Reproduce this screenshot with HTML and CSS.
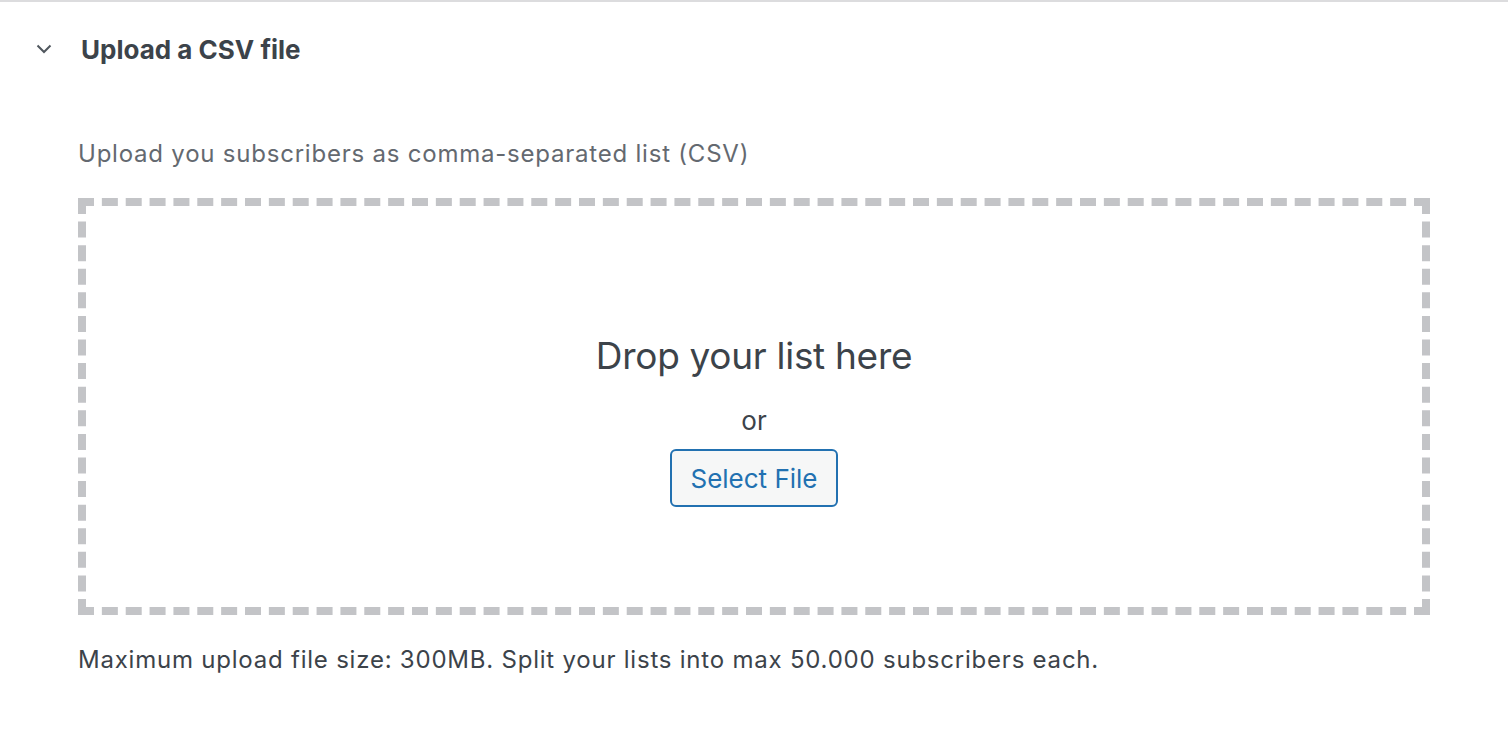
FILE: index.html
```html
<!DOCTYPE html>
<html>
<head>
<meta charset="utf-8">
<link rel="stylesheet" href="styles.css">
</head>
<body>
<section class="panel">
  <header class="panel-header">
    <span class="chevron">
      <svg width="16" height="10" viewBox="0 0 16 10"><path d="M1.5 1.5 L8 8 L14.5 1.5" fill="none" stroke="#50575e" stroke-width="2"/></svg>
    </span>
    <h2 class="panel-title">Upload a CSV file</h2>
  </header>
  <div class="panel-body">
    <p class="intro">Upload you subscribers as comma-separated list (CSV)</p>
    <div class="dropzone">
      <div class="drop-title">Drop your list here</div>
      <div class="drop-or">or</div>
      <button class="select-btn" type="button">Select File</button>
    </div>
    <p class="note">Maximum upload file size: 300MB. Split your lists into max 50.000 subscribers each.</p>
  </div>
</section>
</body>
</html>
```

FILE: styles.css
```css
html, body {
  margin: 0;
  padding: 0;
  background: #ffffff;
}
body {
  font-family: Inter, "Noto Sans", "Liberation Sans", sans-serif;
  color: #3c434a;
}
.panel {
  border-top: 2px solid #dcdcde;
}
.panel-header {
  display: flex;
  align-items: center;
  height: 94px;
}
.chevron {
  width: 16px;
  height: 10px;
  margin-left: 36px;
  margin-right: 29px;
  display: flex;
}
.panel-title {
  margin: 0;
  font-size: 26px;
  font-weight: 700;
  color: #3c434a;
}
.panel-body {
  padding: 0 78px;
}
.intro {
  margin: 42px 0 0;
  font-size: 24px;
  line-height: 32px;
  letter-spacing: 0.78px;
  color: #646970;
}
.dropzone {
  margin-top: 28px;
  height: 417px;
  box-sizing: border-box;
  border: 8px dashed #c3c4c7;
  display: flex;
  flex-direction: column;
  align-items: center;
  padding-top: 127px;
}
.drop-title {
  font-size: 37px;
  line-height: 46px;
  letter-spacing: -0.3px;
  color: #3c434a;
}
.drop-or {
  margin-top: 26px;
  font-size: 26px;
  line-height: 32px;
  color: #3c434a;
}
.select-btn {
  margin-top: 12px;
  width: 168px;
  height: 58px;
  box-sizing: border-box;
  border: 2px solid #2271b1;
  border-radius: 6px;
  background: #f6f7f7;
  color: #2271b1;
  font-family: inherit;
  font-size: 26px;
  padding: 0;
}
.note {
  margin: 29px 0 0;
  font-size: 24px;
  line-height: 32px;
  letter-spacing: 0.78px;
  color: #3c434a;
}
```
